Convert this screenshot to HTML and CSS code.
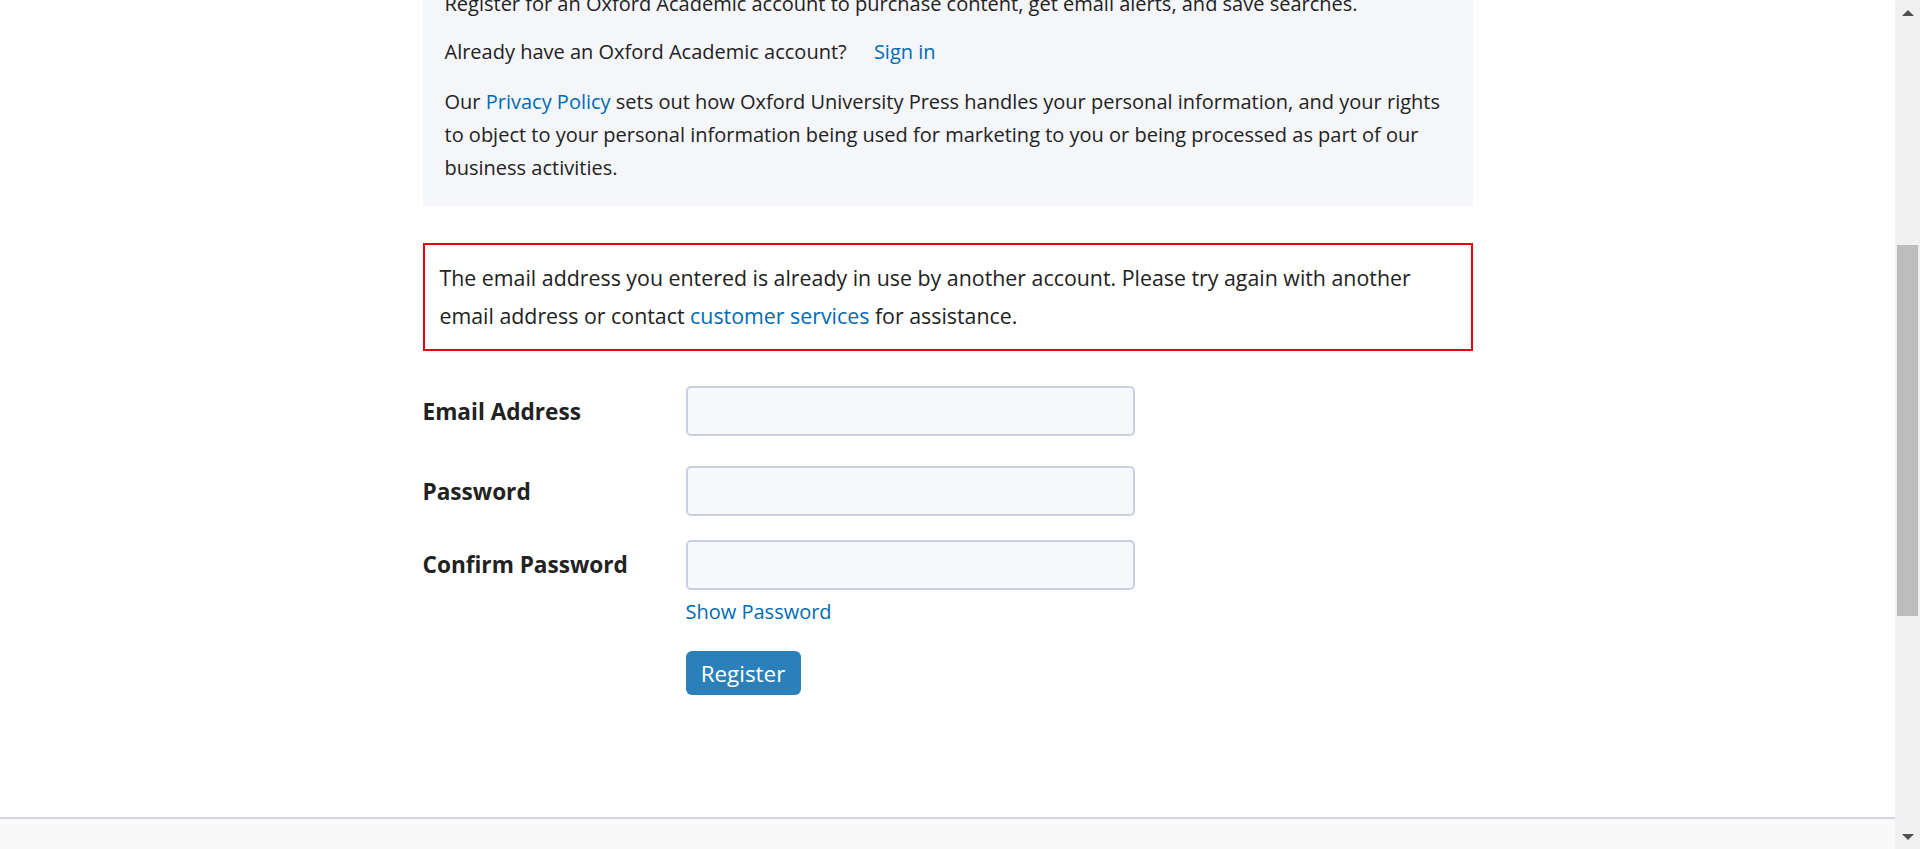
FILE: index.html
```html
<!DOCTYPE html>
<html lang="en">
<head>
<meta charset="utf-8">
<title>Register - Oxford Academic</title>
<link rel="stylesheet" href="styles.css">
</head>
<body>
<div class="window">
  <div class="viewport">
    <main class="page">
      <section class="intro">
        <p class="intro-line">Register for an Oxford Academic account to purchase content, get email alerts, and save searches.</p>
        <p class="intro-line intro-signin">Already have an Oxford Academic account? <a href="#" class="link signin">Sign in</a></p>
        <p class="intro-line intro-last">Our <a href="#" class="link">Privacy Policy</a> sets out how Oxford University Press handles your personal information, and your rights to object to your personal information being used for marketing to you or being processed as part of our business activities.</p>
      </section>

      <div class="error-box">
        The email address you entered is already in use by another account. Please try again with another email address or contact <a href="#" class="link">customer services</a> for assistance.
      </div>

      <form class="reg-form">
        <div class="form-row row-email">
          <label class="form-label" for="email">Email Address</label>
          <input class="form-input" id="email" type="email">
        </div>
        <div class="form-row row-password">
          <label class="form-label" for="pw">Password</label>
          <input class="form-input" id="pw" type="password">
        </div>
        <div class="form-row row-confirm">
          <label class="form-label" for="pw2">Confirm Password</label>
          <div class="field-col">
            <input class="form-input" id="pw2" type="password">
            <a href="#" class="link show-pw">Show Password</a>
            <button type="button" class="btn-register">Register</button>
          </div>
        </div>
      </form>
    </main>
    <footer class="site-footer"></footer>
  </div>
  <div class="scrollbar">
    <div class="sb-arrow sb-up"></div>
    <div class="sb-track"><div class="sb-thumb"></div></div>
    <div class="sb-arrow sb-down"></div>
  </div>
</div>
</body>
</html>
```
FILE: styles.css
```css
html, body {
  margin: 0;
  padding: 0;
  height: 100%;
  overflow: hidden;
  background: #ffffff;
}

body {
  font-family: "Open Sans", "Liberation Sans", sans-serif;
  color: #222222;
  font-size: 20px;
}

.window {
  display: flex;
  height: 849px;
}

.viewport {
  flex: 1;
  display: flex;
  flex-direction: column;
  overflow: hidden;
  min-width: 0;
}

.page {
  width: 1050px;
  margin: -35px auto 0;
  flex: 0 0 auto;
  padding-bottom: 122px;
}

.link {
  color: #006bb3;
  text-decoration: none;
}

/* intro gray box */
.intro {
  background: #f5f6fa;
  padding: 22px;
}

.intro-line {
  margin: 0 0 15px;
  line-height: 33px;
}

.intro-signin {
  margin-bottom: 17px;
}

.signin {
  margin-left: 22px;
}

.intro-last {
  margin-bottom: 0;
}

/* error */
.error-box {
  margin-top: 37px;
  border: 2px solid #e8000b;
  padding: 14px 15px;
  font-size: 21.35px;
  line-height: 38px;
}

/* form */
.reg-form {
  margin-top: 35px;
  display: flex;
  flex-direction: column;
}

.form-row {
  display: grid;
  grid-template-columns: 263px 449px;
  align-items: center;
}

.row-email {
  margin-bottom: 30px;
}

.row-password {
  margin-bottom: 24px;
}

.row-confirm {
  align-items: start;
}

.row-confirm .form-label {
  line-height: 50px;
}

.form-label {
  font-weight: 700;
  font-size: 22.6px;
  color: #222222;
}

.form-input {
  box-sizing: border-box;
  width: 449px;
  height: 50px;
  border: 2px solid #c9cfe0;
  border-radius: 5px;
  background: #f8f9fb;
  font: inherit;
  margin: 0;
  display: block;
}

.field-col {
  display: flex;
  flex-direction: column;
  align-items: flex-start;
}

.show-pw {
  margin-top: 10px;
  line-height: 24px;
  font-size: 20px;
}

.btn-register {
  margin-top: 27px;
  width: 115px;
  height: 44px;
  border: none;
  border-radius: 6px;
  background: #2a80b9;
  color: #ffffff;
  font-family: "Open Sans", "Liberation Sans", sans-serif;
  font-size: 22.4px;
  padding: 0;
  cursor: pointer;
}

/* footer */
.site-footer {
  flex: 1;
  border-top: 2px solid #d3d4e4;
  background: #f9f9f9;
}

/* fake scrollbar */
.scrollbar {
  width: 25px;
  background: #f0f0f0;
  display: flex;
  flex-direction: column;
  align-items: center;
}

.sb-arrow {
  height: 25px;
  width: 25px;
  display: flex;
  align-items: center;
  justify-content: center;
}

.sb-up::before,
.sb-down::before {
  content: "";
  width: 0;
  height: 0;
  border-left: 6px solid transparent;
  border-right: 6px solid transparent;
}

.sb-up::before {
  border-bottom: 6px solid #505050;
}

.sb-down::before {
  border-top: 6px solid #505050;
}

.sb-track {
  flex: 1;
  width: 100%;
  padding-top: 220px;
  box-sizing: border-box;
}

.sb-thumb {
  width: 21px;
  margin-left: 2px;
  height: 371px;
  background: #bdbdbd;
}
```
